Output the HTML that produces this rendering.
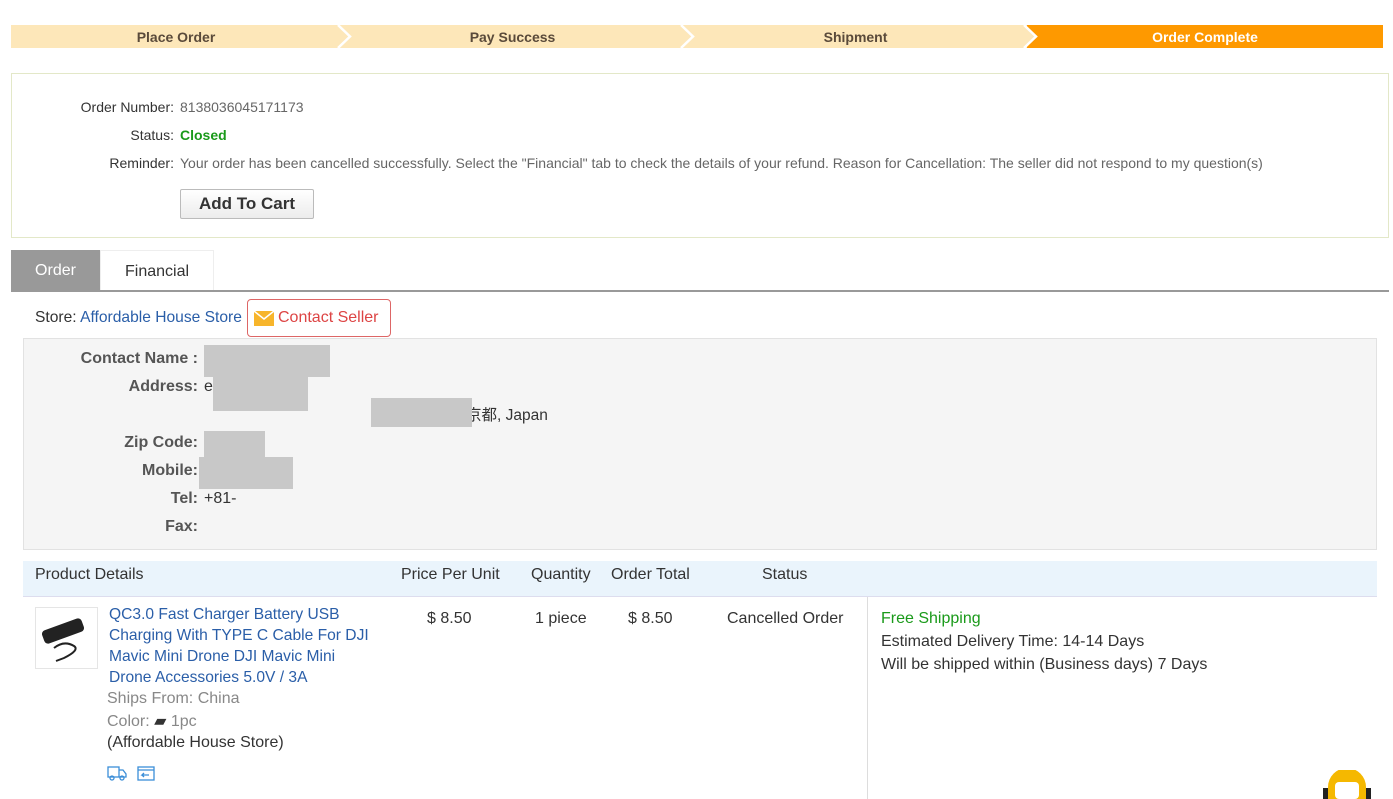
<!DOCTYPE html><html><head><meta charset="utf-8"><style>
body{margin:0;background:#fff;font-family:"Liberation Sans","Noto Sans CJK JP",sans-serif;width:1393px;height:799px;overflow:hidden;position:relative;color:#333}
.a{position:absolute}
.step{position:absolute;top:25px;height:23px;line-height:24px;text-align:center;font-size:14px;font-weight:bold;color:#5a4a3a;background:#fde7b9}
.lbl{position:absolute;text-align:right;font-size:14px;color:#333}
.gray{position:absolute;background:#c8c8c8}
</style></head><body>
<div class="step" style="left:11px;width:330px">Place Order</div>
<div class="step" style="left:341px;width:343px">Pay Success</div>
<div class="step" style="left:684px;width:343px">Shipment</div>
<div class="step" style="left:1027px;width:356px;background:#fe9900;color:#fff">Order Complete</div>
<svg class="a" style="left:0;top:25px" width="1393" height="23">
<polyline points="338,0 350,11.5 338,23" fill="none" stroke="#fff" stroke-width="2.5"/>
<polyline points="681,0 693,11.5 681,23" fill="none" stroke="#fff" stroke-width="2.5"/>
<polygon points="1024,0 1036,11.5 1024,23 1027,23 1027,0" fill="#fde7b9"/>
<polyline points="1024,0 1036,11.5 1024,23" fill="none" stroke="#fff" stroke-width="2.5"/>
</svg>
<div class="a" style="left:11px;top:73px;width:1376px;height:163px;border:1px solid #e3e8c8"></div>
<div class="lbl" style="left:40px;width:134px;top:99px">Order Number:</div>
<div class="a" style="left:180px;top:99px;font-size:14px;color:#666">8138036045171173</div>
<div class="lbl" style="left:40px;width:134px;top:127px">Status:</div>
<div class="a" style="left:180px;top:127px;font-size:14px;color:#1a9a1a;font-weight:bold">Closed</div>
<div class="lbl" style="left:40px;width:134px;top:155px">Reminder:</div>
<div class="a" style="left:180px;top:155px;font-size:14px;color:#666;white-space:nowrap">Your order has been cancelled successfully. Select the "Financial" tab to check the details of your refund. Reason for Cancellation: The seller did not respond to my question(s)</div>
<div class="a" style="left:180px;top:189px;width:132px;height:28px;border:1px solid #bbb;border-radius:2px;background:linear-gradient(#fff,#ececec);font-size:17px;font-weight:bold;line-height:28px;text-align:center;color:#333">Add To Cart</div>
<div class="a" style="left:11px;top:250px;width:89px;height:40px;background:#999;color:#fff;font-size:16px;line-height:41px;text-align:center">Order</div>
<div class="a" style="left:100px;top:250px;width:112px;height:40px;border:1px solid #eee;border-bottom:none;font-size:16px;line-height:41px;text-align:center;color:#333">Financial</div>
<div class="a" style="left:11px;top:290px;width:1378px;height:2px;background:#999"></div>
<div class="a" style="left:35px;top:309px;font-size:15.6px;color:#333">Store: <span style="color:#2a5ea8">Affordable House Store</span></div>
<div class="a" style="left:247px;top:299px;width:142px;height:36px;border:1px solid #d66;border-radius:4px;font-size:16px;line-height:36px;color:#d44"><svg style="position:absolute;left:6px;top:11px" width="20" height="15"><rect width="20" height="15" fill="#f7b52b"/><polyline points="0,0 10,8 20,0" fill="none" stroke="#fff" stroke-width="1.5"/></svg><span style="position:absolute;left:30px">Contact Seller</span></div>
<div class="a" style="left:23px;top:338px;width:1352px;height:210px;background:#f5f5f5;border:1px solid #e2e2e2"></div>
<div class="lbl" style="left:40px;width:158px;top:350px;font-size:16px;font-weight:bold;color:#555">Contact Name :</div>
<div class="lbl" style="left:40px;width:158px;top:378px;font-size:16px;font-weight:bold;color:#555">Address:</div>
<div class="lbl" style="left:40px;width:158px;top:434px;font-size:16px;font-weight:bold;color:#555">Zip Code:</div>
<div class="lbl" style="left:40px;width:158px;top:462px;font-size:16px;font-weight:bold;color:#555">Mobile:</div>
<div class="lbl" style="left:40px;width:158px;top:490px;font-size:16px;font-weight:bold;color:#555">Tel:</div>
<div class="lbl" style="left:40px;width:158px;top:518px;font-size:16px;font-weight:bold;color:#555">Fax:</div>
<div class="a" style="left:204px;top:378px;font-size:16px">e</div>
<div class="a" style="left:204px;top:490px;font-size:16px">+81-</div>
<div class="a" style="left:466px;top:403px;font-size:15.5px">京都, Japan</div>
<div class="gray" style="left:204px;top:345px;width:126px;height:32px"></div>
<div class="gray" style="left:213px;top:377px;width:95px;height:34px"></div>
<div class="gray" style="left:371px;top:398px;width:101px;height:29px"></div>
<div class="gray" style="left:204px;top:431px;width:61px;height:28px"></div>
<div class="gray" style="left:199px;top:457px;width:94px;height:32px"></div>
<div class="a" style="left:23px;top:561px;width:1354px;height:35px;background:#eaf4fc;border-bottom:1px solid #dde"></div>
<div class="a" style="left:35px;top:566px;font-size:16px">Product Details</div>
<div class="a" style="left:401px;top:566px;font-size:16px">Price Per Unit</div>
<div class="a" style="left:531px;top:566px;font-size:16px">Quantity</div>
<div class="a" style="left:611px;top:566px;font-size:16px">Order Total</div>
<div class="a" style="left:762px;top:566px;font-size:16px">Status</div>
<div class="a" style="left:35px;top:607px;width:61px;height:60px;border:1px solid #e5e5e5"><svg width="61" height="60"><rect x="6" y="16" width="42" height="14" rx="4" transform="rotate(-20 27 23)" fill="#222"/><path d="M18 40 q10 -8 20 -2 q6 4 -10 12 l-8 3" fill="none" stroke="#222" stroke-width="2"/></svg></div>
<div class="a" style="left:109px;top:604px;width:270px;font-size:15.6px;line-height:21px;color:#2a5ea8">QC3.0 Fast Charger Battery USB Charging With TYPE C Cable For DJI Mavic Mini Drone DJI Mavic Mini Drone Accessories 5.0V / 3A</div>
<div class="a" style="left:107px;top:690px;font-size:16px;color:#888">Ships From: China</div>
<div class="a" style="left:107px;top:711px;font-size:16px;color:#888">Color: <span style="color:#333">▰</span> 1pc</div>
<div class="a" style="left:107px;top:734px;font-size:16px;color:#333">(Affordable House Store)</div>
<svg class="a" style="left:107px;top:765px" width="50" height="16"><g fill="none" stroke="#3b8ed8" stroke-width="1.3"><rect x="1" y="2" width="11" height="10"/><path d="M12 5h4l3 4v3h-7"/><circle cx="5" cy="13" r="2"/><circle cx="15" cy="13" r="2"/><rect x="31" y="2" width="16" height="13"/><path d="M31 5h16M42 10h-7l2-2M35 10l2 2"/></g></svg>
<div class="a" style="left:427px;top:610px;font-size:16px">$ 8.50</div>
<div class="a" style="left:535px;top:610px;font-size:16px">1 piece</div>
<div class="a" style="left:628px;top:610px;font-size:16px">$ 8.50</div>
<div class="a" style="left:727px;top:610px;font-size:16px">Cancelled Order</div>
<div class="a" style="left:867px;top:597px;width:1px;height:202px;background:#ddd"></div>
<div class="a" style="left:881px;top:610px;font-size:16px;color:#1a9a1a">Free Shipping</div>
<div class="a" style="left:881px;top:633px;font-size:16px">Estimated Delivery Time: 14-14 Days</div>
<div class="a" style="left:881px;top:656px;font-size:16px">Will be shipped within (Business days) 7 Days</div>
<svg class="a" style="left:1322px;top:770px" width="50" height="29"><path d="M6 29 v-12 a19 19 0 0 1 38 0 v12z" fill="#f5b800"/><rect x="13" y="12" width="24" height="17" rx="4" fill="#fff"/><rect x="1" y="18" width="5" height="11" fill="#222"/><rect x="44" y="18" width="5" height="11" fill="#222"/></svg>
</body></html>
